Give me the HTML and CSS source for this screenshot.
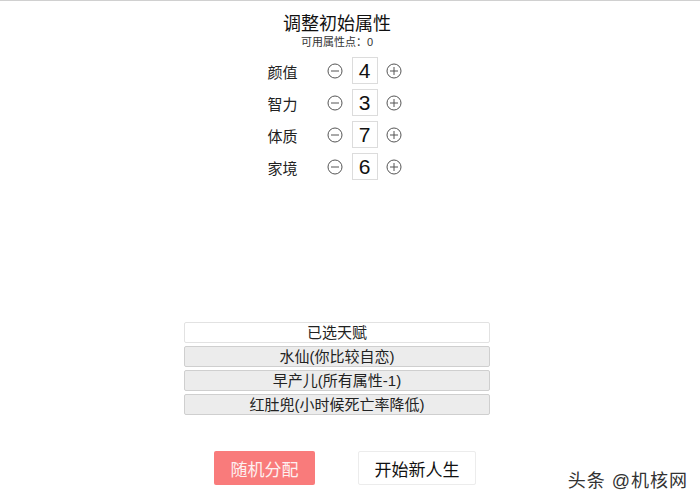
FILE: index.html
```html
<!DOCTYPE html>
<html lang="zh">
<head>
    <meta charset="UTF-8">
    <meta name="viewport" content="width=device-width, initial-scale=1">
    <title>人生重开</title>
    <link rel="stylesheet" href="styles.css">
</head>
<body>
<div class="page">
    <div class="header">
        <h1>调整初始属性</h1>
        <p class="points">可用属性点：0</p>
    </div>
    <div class="props">
        <div class="prop">
            <span class="propName">颜值</span>
            <svg class="btnIcon" viewBox="0 0 16 16"><circle cx="8" cy="8" r="7"/><line x1="4" y1="8" x2="12" y2="8"/></svg>
            <span class="value">4</span>
            <svg class="btnIcon plus" viewBox="0 0 16 16"><circle cx="8" cy="8" r="7"/><line x1="4" y1="8" x2="12" y2="8"/><line x1="8" y1="4" x2="8" y2="12"/></svg>
        </div>
        <div class="prop">
            <span class="propName">智力</span>
            <svg class="btnIcon" viewBox="0 0 16 16"><circle cx="8" cy="8" r="7"/><line x1="4" y1="8" x2="12" y2="8"/></svg>
            <span class="value">3</span>
            <svg class="btnIcon plus" viewBox="0 0 16 16"><circle cx="8" cy="8" r="7"/><line x1="4" y1="8" x2="12" y2="8"/><line x1="8" y1="4" x2="8" y2="12"/></svg>
        </div>
        <div class="prop">
            <span class="propName">体质</span>
            <svg class="btnIcon" viewBox="0 0 16 16"><circle cx="8" cy="8" r="7"/><line x1="4" y1="8" x2="12" y2="8"/></svg>
            <span class="value">7</span>
            <svg class="btnIcon plus" viewBox="0 0 16 16"><circle cx="8" cy="8" r="7"/><line x1="4" y1="8" x2="12" y2="8"/><line x1="8" y1="4" x2="8" y2="12"/></svg>
        </div>
        <div class="prop">
            <span class="propName">家境</span>
            <svg class="btnIcon" viewBox="0 0 16 16"><circle cx="8" cy="8" r="7"/><line x1="4" y1="8" x2="12" y2="8"/></svg>
            <span class="value">6</span>
            <svg class="btnIcon plus" viewBox="0 0 16 16"><circle cx="8" cy="8" r="7"/><line x1="4" y1="8" x2="12" y2="8"/><line x1="8" y1="4" x2="8" y2="12"/></svg>
        </div>
    </div>
    <ul class="talents">
        <li class="talentsTitle">已选天赋</li>
        <li>水仙(你比较自恋)</li>
        <li>早产儿(所有属性-1)</li>
        <li>红肚兜(小时候死亡率降低)</li>
    </ul>
    <div class="actions">
        <button class="random">随机分配</button>
        <button class="start">开始新人生</button>
    </div>
</div>
<div class="mark">头条 @机核网</div>
</body>
</html>
```

FILE: styles.css
```css
body {
    margin: 0;
    height: 502px;
    border-top: 1px solid #d0d0d0;
    background: #fff;
    color: #222;
    font-family: "Liberation Sans", "Noto Sans CJK SC", sans-serif;
    position: relative;
    overflow: hidden;
}

.page {
    width: 674px;
    display: flex;
    flex-direction: column;
    align-items: center;
}

.header {
    padding-top: 12px;
    text-align: center;
}

h1 {
    margin: 0;
    font-size: 18px;
    line-height: 22px;
    font-weight: normal;
    color: #111;
}

.points {
    margin: 0;
    font-size: 11px;
    line-height: 14px;
    color: #333;
}

.props {
    margin-top: 8px;
    margin-right: 5px;
    display: flex;
    flex-direction: column;
    gap: 5px;
}

.prop {
    display: flex;
    align-items: center;
    height: 27px;
}

.propName {
    width: 32px;
    font-size: 15px;
    margin-top: 2px;
    margin-right: 27px;
    color: #222;
}

.btnIcon {
    width: 16px;
    height: 16px;
    fill: none;
    stroke: #555;
    stroke-width: 1;
}

.value {
    box-sizing: border-box;
    width: 26px;
    height: 27px;
    margin: 0 8px 0 9px;
    border: 1px solid #dcdcdc;
    font-size: 21px;
    line-height: 25px;
    text-align: center;
    color: #111;
}

.talents {
    list-style: none;
    margin: 142px 0 0;
    padding: 0;
    width: 306px;
    display: flex;
    flex-direction: column;
    gap: 3px;
}

.talents li {
    box-sizing: border-box;
    height: 21px;
    border: 1px solid #cfcfcf;
    border-radius: 2px;
    background: #ececec;
    font-size: 15px;
    line-height: 19px;
    text-align: center;
    color: #222;
}

.talents .talentsTitle {
    background: #fff;
    border-color: #e2e2e2;
}

.actions {
    margin-top: 36px;
    padding-left: 16px;
    display: flex;
    gap: 43px;
}

.actions button {
    box-sizing: border-box;
    height: 34px;
    border-radius: 2px;
    font-family: inherit;
    font-size: 17px;
    cursor: pointer;
}

.random {
    width: 101px;
    background: #f97b7b;
    border: none;
    color: #fdf0f0;
}

.start {
    width: 118px;
    background: #fff;
    border: 1px solid #ececec;
    color: #111;
}

/* watermark in the corner */
.mark {
    position: absolute;
    right: 12px;
    bottom: 11px;
    font-size: 18px;
    letter-spacing: 1px;
    color: #333;
    text-shadow: 0 0 2px #fff;
}
```
